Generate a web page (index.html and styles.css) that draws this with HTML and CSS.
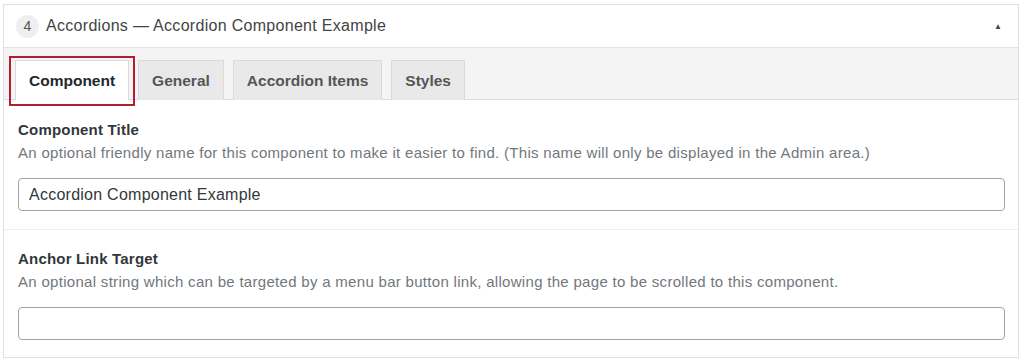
FILE: index.html
```html
<!DOCTYPE html>
<html lang="en">
<head>
  <meta charset="UTF-8" />
  <title>Accordions</title>
  <link rel="stylesheet" href="styles.css">
</head>
<body>
  <div class="panel">
    <div class="panel-header">
      <span class="badge">4</span>
      <span class="panel-title">Accordions — Accordion Component Example</span>
      <span class="toggle">&#9650;</span>
    </div>

    <div class="tab-bar">
      <div class="tab active highlighted">Component</div>
      <div class="tab">General</div>
      <div class="tab">Accordion Items</div>
      <div class="tab">Styles</div>
    </div>

    <div class="field">
      <label class="field-label">Component Title</label>
      <p class="field-desc">An optional friendly name for this component to make it easier to find. (This name will only be displayed in the Admin area.)</p>
      <input type="text" class="field-input" value="Accordion Component Example" />
    </div>

    <div class="field">
      <label class="field-label">Anchor Link Target</label>
      <p class="field-desc">An optional string which can be targeted by a menu bar button link, allowing the page to be scrolled to this component.</p>
      <input type="text" class="field-input" value="" />
    </div>
  </div>
</body>
</html>
```

FILE: styles.css
```css
* {
  margin: 0;
  padding: 0;
  box-sizing: border-box;
  font-family: 'Liberation Sans', Arial, sans-serif;
}
body {
  background: #ffffff;
}
.panel {
  margin: 4px 0 0 3px;
  width: 1016px;
  border: 1px solid #e0e0e0;
  background: #ffffff;
}
.panel-header {
  height: 43px;
  display: flex;
  align-items: center;
  padding: 0 12px 0 12px;
  border-bottom: 1px solid #e2e2e2;
}
.badge {
  width: 23px;
  height: 23px;
  border-radius: 50%;
  background: #efefef;
  color: #555;
  font-size: 14px;
  display: flex;
  align-items: center;
  justify-content: center;
  margin-right: 7px;
}
.panel-title {
  flex: 1;
  font-size: 16px;
  letter-spacing: 0.3px;
  color: #444;
}
.toggle {
  font-size: 8px;
  color: #444;
  margin-right: 4px;
}
.tab-bar {
  display: flex;
  gap: 9px;
  background: #f4f4f4;
  padding: 12px 0 0 11px;
  border-bottom: 1px solid #dcdcdc;
}
.tab {
  height: 40px;
  margin-bottom: -1px;
  padding: 0 13px;
  display: flex;
  align-items: center;
  font-size: 15.5px;
  font-weight: bold;
  color: #555;
  background: #e9e9e9;
  border: 1px solid #dadada;
  border-bottom: none;
}
.tab.active {
  background: #ffffff;
  color: #23282d;
}
.highlighted {
  position: relative;
}
.highlighted::after {
  content: "";
  position: absolute;
  left: -7px;
  right: -7px;
  top: -5px;
  bottom: -6px;
  border: 2px solid #b21f2a;
}
.field {
  padding: 20px 13px 18px 14px;
  border-bottom: 1px solid #eeeeee;
}
.field:last-child {
  padding-top: 19px;
  padding-bottom: 17px;
  border-bottom: none;
}
.field-label {
  display: block;
  font-size: 15px;
  line-height: 20px;
  letter-spacing: 0.2px;
  font-weight: bold;
  color: #32373c;
  margin-bottom: 3px;
}
.field-desc {
  font-size: 15px;
  line-height: 20px;
  letter-spacing: 0.3px;
  color: #72777c;
}
.field-input {
  display: block;
  width: 100%;
  height: 33px;
  margin-top: 15px;
  padding: 0 10px;
  border: 1px solid #a4a4a4;
  border-radius: 4px;
  font-size: 16px;
  letter-spacing: 0.25px;
  color: #32373c;
  background: #ffffff;
}
```
